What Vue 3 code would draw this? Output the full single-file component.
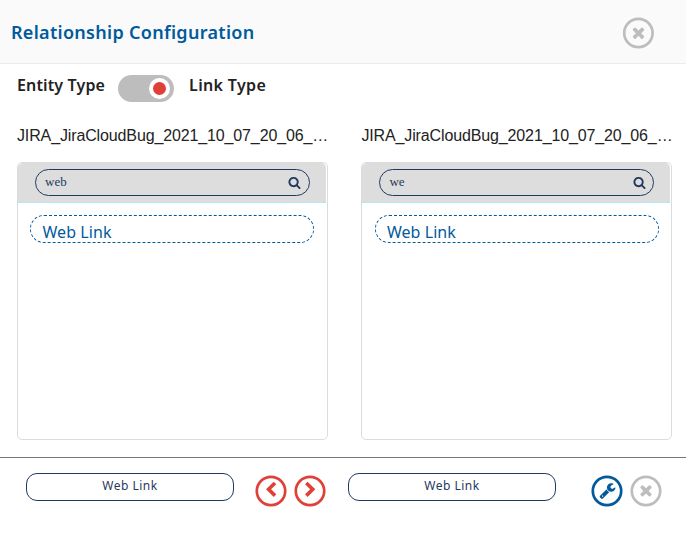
<script setup>
import { ref } from 'vue'

const panels = ref([
  { name: 'JIRA_JiraCloudBug_2021_10_07_20_06_…', query: 'web', link: 'Web Link' },
  { name: 'JIRA_JiraCloudBug_2021_10_07_20_06_…', query: 'we', link: 'Web Link' },
])

const icons = {
  times: 'M1490 1322q0 40-28 68l-136 136q-28 28-68 28t-68-28l-294-294-294 294q-28 28-68 28t-68-28l-136-136q-28-28-28-68t28-68l294-294-294-294q-28-28-28-68t28-68l136-136q28-28 68-28t68 28l294 294 294-294q28-28 68-28t68 28l136 136q28 28 28 68t-28 68l-294 294 294 294q28 28 28 68z',
  search: 'M1216 832q0-185-131.5-316.5t-316.5-131.5-316.5 131.5-131.5 316.5 131.5 316.5 316.5 131.5 316.5-131.5 131.5-316.5zm512 832q0 52-38 90t-90 38q-54 0-90-38l-343-342q-179 124-399 124-143 0-273.5-55.5t-225-150-150-225-55.5-273.5 55.5-273.5 150-225 225-150 273.5-55.5 273.5 55.5 225 150 150 225 55.5 273.5q0 220-124 399l343 343q37 37 37 90z',
  wrench: 'M448 1472q0-26-19-45t-45-19-45 19-19 45 19 45 45 19 45-19 19-45zm644-420l-682 682q-37 37-90 37-52 0-91-37l-106-108q-38-36-38-90 0-53 38-91l681-681q39 98 114.5 173.5t173.5 114.5zm634-435q0 39-23 106-47 134-164.5 217.5t-258.5 83.5q-185 0-316.5-131.5t-131.5-316.5 131.5-316.5 316.5-131.5q58 0 121.5 16.5t107.5 46.5q16 11 16 28t-16 28l-293 169v224l193 107q5-3 79-48.5t135.5-81 70.5-35.5q15 0 23.5 10t8.5 25z',
}
</script>

<template>
  <div class="dialog">
    <header class="head">
      <h1 class="title">Relationship Configuration</h1>
      <svg class="round grey" viewBox="0 0 32 32">
        <circle cx="16" cy="16" r="14.2" />
        <path :d="icons.times" transform="translate(7.5 7) scale(.0096)" />
      </svg>
    </header>

    <div class="switch-row">
      <span class="label">Entity Type</span>
      <span class="toggle"><span class="knob"></span></span>
      <span class="label link">Link Type</span>
    </div>

    <main class="columns">
      <section v-for="(p, i) in panels" :key="i" class="column">
        <div class="name">{{ p.name }}</div>
        <div class="panel">
          <div class="panel-head">
            <div class="search">
              <span class="query">{{ p.query }}</span>
              <svg class="lens" viewBox="0 0 1792 1792"><path :d="icons.search" /></svg>
            </div>
          </div>
          <div class="item"><span>{{ p.link }}</span></div>
        </div>
      </section>
    </main>

    <footer class="foot">
      <div class="pill">Web Link</div>
      <div class="arrows">
        <svg class="round red" viewBox="0 0 32 32">
          <circle cx="16" cy="16" r="14.2" />
          <path d="M18.7 6.8l2.6 2.5-5.2 5 5.2 5-2.6 2.6-7.7-7.6z" />
        </svg>
        <svg class="round red" viewBox="0 0 32 32">
          <circle cx="16" cy="16" r="14.2" />
          <path d="M13.6 6.8l-2.6 2.5 5.2 5-5.2 5 2.6 2.6 7.7-7.6z" />
        </svg>
      </div>
      <div class="pill">Web Link</div>
      <div class="actions">
        <svg class="round blue" viewBox="0 0 32 32">
          <circle cx="16" cy="16" r="14.2" />
          <path :d="icons.wrench" transform="translate(7.9 6.9) scale(.0096)" />
        </svg>
        <svg class="round grey" viewBox="0 0 32 32">
          <circle cx="16" cy="16" r="14.2" />
          <path :d="icons.times" transform="translate(7.4 6.7) scale(.0096)" />
        </svg>
      </div>
    </footer>
  </div>
</template>

<style>
body {
  background: #fff;
}
</style>

<style scoped>
.dialog {
  width: 686px;
  height: 540px;
  overflow: hidden;
  box-sizing: border-box;
  font-family: "Noto Sans", "Open Sans", sans-serif;
  color: #222;
}
.head {
  display: flex;
  align-items: center;
  justify-content: space-between;
  box-sizing: border-box;
  height: 64px;
  padding: 2px 32px 0 11px;
  background: #fafafa;
  border-bottom: 1px solid #ececec;
}
.title {
  margin: 0;
  padding-bottom: 2px;
  font-size: 18px;
  line-height: 24px;
  font-weight: 600;
  letter-spacing: 0.3px;
  color: #005a9c;
}
.round {
  display: block;
  width: 32px;
  height: 32px;
  flex: none;
}
.head .round {
  transform: translateX(0.4px);
}
.round circle {
  fill: none;
  stroke: currentColor;
  stroke-width: 2.7;
}
.round path {
  fill: currentColor;
}
.grey { color: #bdbdbd; }
.red { color: #df4038; }
.blue { color: #005a9c; }

.switch-row {
  display: flex;
  align-items: flex-start;
  height: 60px;
  box-sizing: border-box;
  padding: 9px 0 0 17px;
}
.label {
  font-size: 16px;
  line-height: 24px;
  font-weight: 600;
  letter-spacing: 0.14px;
}
.label.link {
  letter-spacing: 0.34px;
}
.toggle {
  display: flex;
  justify-content: flex-end;
  align-items: center;
  box-sizing: border-box;
  width: 56px;
  height: 27px;
  margin: 2px 15px 0 13px;
  padding-right: 4px;
  border-radius: 14px;
  background: #bdbdbd;
}
.knob {
  box-sizing: border-box;
  width: 21px;
  height: 21px;
  border: 4px solid #fff;
  border-radius: 50%;
  background: #df4038;
}

.columns {
  display: grid;
  grid-template-columns: 311px 311px;
  column-gap: 33.4px;
  padding-left: 17px;
  height: 333px;
}
.name {
  height: 38px;
  line-height: 24px;
  font-family: "Liberation Sans", Arial, sans-serif;
  font-size: 16px;
  letter-spacing: -0.13px;
  white-space: nowrap;
}
.panel {
  box-sizing: border-box;
  height: 278px;
  border: 1px solid #dcdcdc;
  border-bottom-width: 1.5px;
  border-radius: 5px;
  overflow: hidden;
}
.panel-head {
  box-sizing: border-box;
  height: 40px;
  margin-right: 1px;
  padding: 6px 16px 0 17px;
  background: #ddd;
  border-bottom: 1px solid #b5e7f0;
  border-radius: 5px 5px 0 0;
}
.search {
  display: flex;
  align-items: center;
  justify-content: space-between;
  box-sizing: border-box;
  height: 27px;
  padding: 0 7.6px 0 9px;
  border: 1px solid #1f3a60;
  border-radius: 14px;
  color: #1f3a60;
}
.query {
  padding-bottom: 1px;
  font-family: "Liberation Serif", "Times New Roman", serif;
  font-size: 13px;
  line-height: 22px;
}
.lens {
  width: 13px;
  height: 13px;
  fill: currentColor;
}
.item {
  box-sizing: border-box;
  width: 284px;
  height: 28px;
  margin: 12px 0 0 12.2px;
  padding: 4px 0 0 11.3px;
  border: 1px dashed #005a9c;
  border-radius: 14px;
  color: #005a9c;
  font-size: 16px;
  line-height: 24px;
  letter-spacing: 0.06px;
}

.foot {
  display: flex;
  align-items: flex-start;
  box-sizing: border-box;
  height: 83px;
  padding: 15px 0 0 26px;
  border-top: 1px solid #777;
}
.pill {
  box-sizing: border-box;
  width: 208px;
  height: 28px;
  border: 1px solid #1f3a60;
  border-radius: 11px;
  color: #1f3a60;
  font-size: 12px;
  line-height: 24px;
  letter-spacing: 0.5px;
  text-align: center;
}
.arrows,
.actions {
  display: flex;
  gap: 7px;
  padding-top: 2px;
}
.arrows {
  width: 92px;
  margin: 0 1px 0 21px;
}
.actions {
  margin-left: 35px;
}
</style>
